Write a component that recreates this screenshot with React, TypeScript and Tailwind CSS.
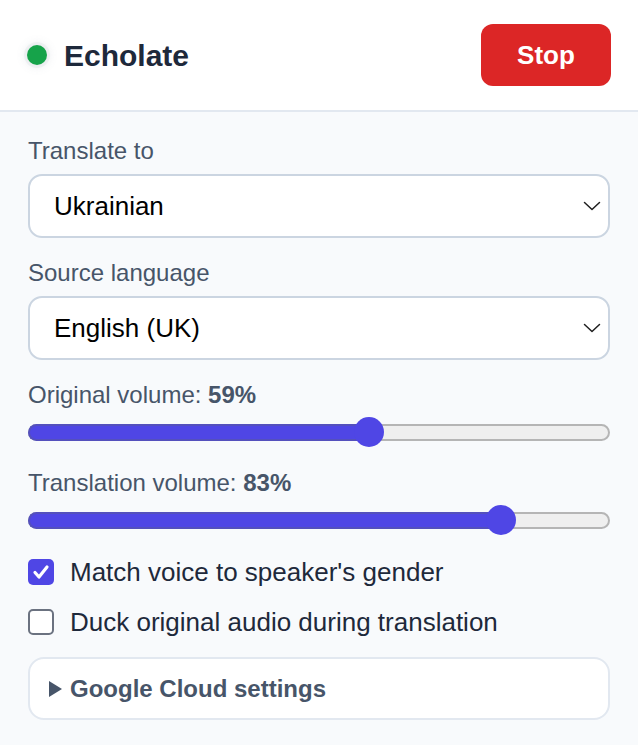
import React from "react";

const TRACK_W = 582;
const THUMB = 30;

function Chevron() {
  return (
    <svg width="18" height="10" viewBox="0 0 18 10" fill="none">
      <path d="M1.5 1.5l7.5 7 7.5-7" stroke="#1f1f1f" strokeWidth="1.5" strokeLinecap="round" strokeLinejoin="round" />
    </svg>
  );
}

function SelectBox({ value }: { value: string }) {
  return (
    <div className="flex h-[64px] items-center justify-between rounded-[14px] border-2 border-[#cbd5e1] bg-white pl-[24px] pr-[7px]">
      <span className="text-[26px] text-black">{value}</span>
      <Chevron />
    </div>
  );
}

function Slider({ pct }: { pct: number }) {
  const center = THUMB / 2 + (pct / 100) * (TRACK_W - THUMB);
  return (
    <div className="relative flex h-[30px] items-center">
      <div className="h-[17px] w-full rounded-full border-2 border-[#b5b5b5] bg-[#efefef]" />
      <div
        className="absolute left-0 h-[17px] rounded-l-full border-y-2 border-l-2 border-[#5450bd] bg-[#4f46e5]"
        style={{ width: center }}
      />
      <div
        className="absolute top-0 h-[30px] w-[30px] rounded-full bg-[#4f46e5]"
        style={{ left: center - THUMB / 2 }}
      />
    </div>
  );
}

function Check({ checked, label }: { checked: boolean; label: string }) {
  return (
    <div className="flex h-[30px] items-center gap-[16px]">
      {checked ? (
        <div className="flex h-[26px] w-[26px] items-center justify-center rounded-[5px] bg-[#4f46e5]">
          <svg width="18" height="16" viewBox="0 0 18 16" fill="none">
            <path d="M3 8.5l4 4.5 8-10" stroke="white" strokeWidth="3.2" strokeLinecap="round" strokeLinejoin="round" />
          </svg>
        </div>
      ) : (
        <div className="h-[26px] w-[26px] rounded-[5px] border-2 border-[#6b7280] bg-white" />
      )}
      <span className="text-[26px] text-[#1e293b]">{label}</span>
    </div>
  );
}

export default function App() {
  return (
    <div className="min-h-[745px] w-[638px] bg-[#f8fafc] font-['Liberation_Sans',Arial,sans-serif]">
      {/* Header */}
      <div className="flex h-[112px] items-center justify-between border-b-2 border-[#e2e8f0] bg-white pl-[27px] pr-[27px]">
        <div className="flex items-center gap-[17px]">
          <div className="h-[20px] w-[20px] rounded-full bg-[#16a34a] shadow-[0_0_0_3px_rgba(100,116,139,0.06),0_0_8px_3px_rgba(100,116,139,0.1)]" />
          <span className="text-[30px] font-bold text-[#1e293b]">Echolate</span>
        </div>
        <button className="h-[62px] w-[130px] rounded-[12px] bg-[#dc2626] text-[26px] font-bold text-white">
          Stop
        </button>
      </div>

      {/* Body */}
      <div className="flex flex-col px-[28px] pt-[25px] pb-[25px]">
        <label className="h-[28px] text-[24px] leading-[28px] text-[#475569]">Translate to</label>
        <div className="mt-[9px]">
          <SelectBox value="Ukrainian" />
        </div>

        <label className="mt-[21px] h-[28px] text-[24px] leading-[28px] text-[#475569]">Source language</label>
        <div className="mt-[9px]">
          <SelectBox value="English (UK)" />
        </div>

        <div className="mt-[21px] h-[28px] text-[24px] leading-[28px] text-[#475569]">
          Original volume: <span className="font-bold">59%</span>
        </div>
        <div className="mt-[8px]">
          <Slider pct={59} />
        </div>

        <div className="mt-[22px] h-[28px] text-[24px] leading-[28px] text-[#475569]">
          Translation volume: <span className="font-bold">83%</span>
        </div>
        <div className="mt-[8px]">
          <Slider pct={83} />
        </div>

        <div className="mt-[22px]">
          <Check checked label="Match voice to speaker's gender" />
        </div>
        <div className="mt-[20px]">
          <Check checked={false} label="Duck original audio during translation" />
        </div>

        <div className="mt-[20px] flex h-[63px] items-center gap-[8px] rounded-[16px] border-2 border-[#e2e8f0] bg-white px-[19px]">
          <svg width="13" height="16" viewBox="0 0 13 16">
            <path d="M0 0l13 8-13 8z" fill="#475569" />
          </svg>
          <span className="text-[24px] font-bold text-[#475569]">Google Cloud settings</span>
        </div>
      </div>
    </div>
  );
}
